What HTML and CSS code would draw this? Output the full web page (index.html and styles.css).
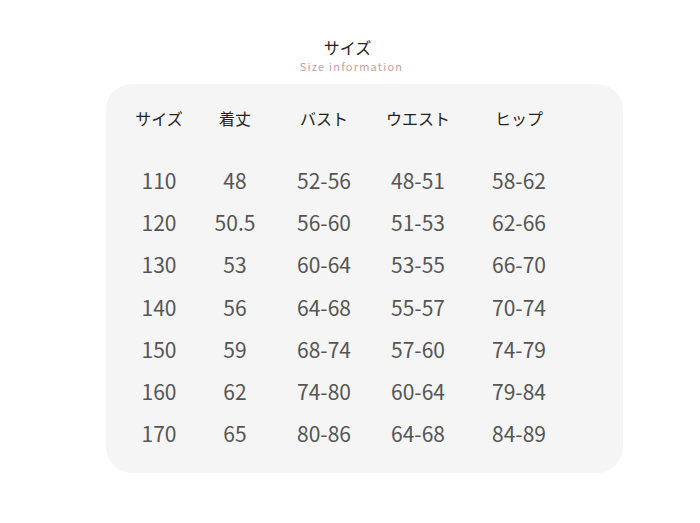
FILE: index.html
```
<!DOCTYPE html>
<html lang="ja">
<head>
<meta charset="utf-8">
<link rel="stylesheet" href="styles.css">
</head>
<body>
<div class="page">
  <div class="title">
    <div class="title-jp">サイズ</div>
    <div class="title-en">Size information</div>
  </div>
  <div class="panel">
    <div class="grid head">
      <div>サイズ</div><div>着丈</div><div>バスト</div><div>ウエスト</div><div>ヒップ</div>
    </div>
    <div class="rows">
      <div class="grid row"><div>110</div><div>48</div><div>52-56</div><div>48-51</div><div>58-62</div></div>
      <div class="grid row"><div>120</div><div>50.5</div><div>56-60</div><div>51-53</div><div>62-66</div></div>
      <div class="grid row"><div>130</div><div>53</div><div>60-64</div><div>53-55</div><div>66-70</div></div>
      <div class="grid row"><div>140</div><div>56</div><div>64-68</div><div>55-57</div><div>70-74</div></div>
      <div class="grid row"><div>150</div><div>59</div><div>68-74</div><div>57-60</div><div>74-79</div></div>
      <div class="grid row"><div>160</div><div>62</div><div>74-80</div><div>60-64</div><div>79-84</div></div>
      <div class="grid row"><div>170</div><div>65</div><div>80-86</div><div>64-68</div><div>84-89</div></div>
    </div>
  </div>
</div>
</body>
</html>
```
FILE: styles.css
```
html, body {
  margin: 0;
  padding: 0;
  background: #ffffff;
}
body {
  font-family: "Noto Sans CJK JP", "Noto Sans", sans-serif;
  width: 700px;
  height: 523px;
  overflow: hidden;
}
.page {
  padding-top: 37px;
  padding-left: 106px;
}
.title {
  width: 517px;
  height: 47px;
  display: flex;
  flex-direction: column;
  align-items: center;
  margin-left: -17px;
}
.title-jp {
  font-size: 16px;
  line-height: 20px;
  color: #222;
}
.title-en {
  font-size: 11px;
  line-height: 14px;
  color: #c99ea0;
  letter-spacing: 1.2px;
  margin-left: 8px;
  margin-top: 2px;
}
.panel {
  width: 517px;
  height: 389px;
  box-sizing: border-box;
  background: #f5f5f5;
  border-radius: 26px;
  padding: 20px 0 0 15px;
}
.grid {
  display: grid;
  grid-template-columns: 76px 76px 102px 86px 116px;
  text-align: center;
}
.head {
  height: 28px;
  line-height: 28px;
  font-size: 16px;
  color: #222;
}
.rows {
  margin-top: 27px;
}
.row {
  height: 42.2px;
  line-height: 42px;
  font-size: 21px;
  color: #555;
}
```
